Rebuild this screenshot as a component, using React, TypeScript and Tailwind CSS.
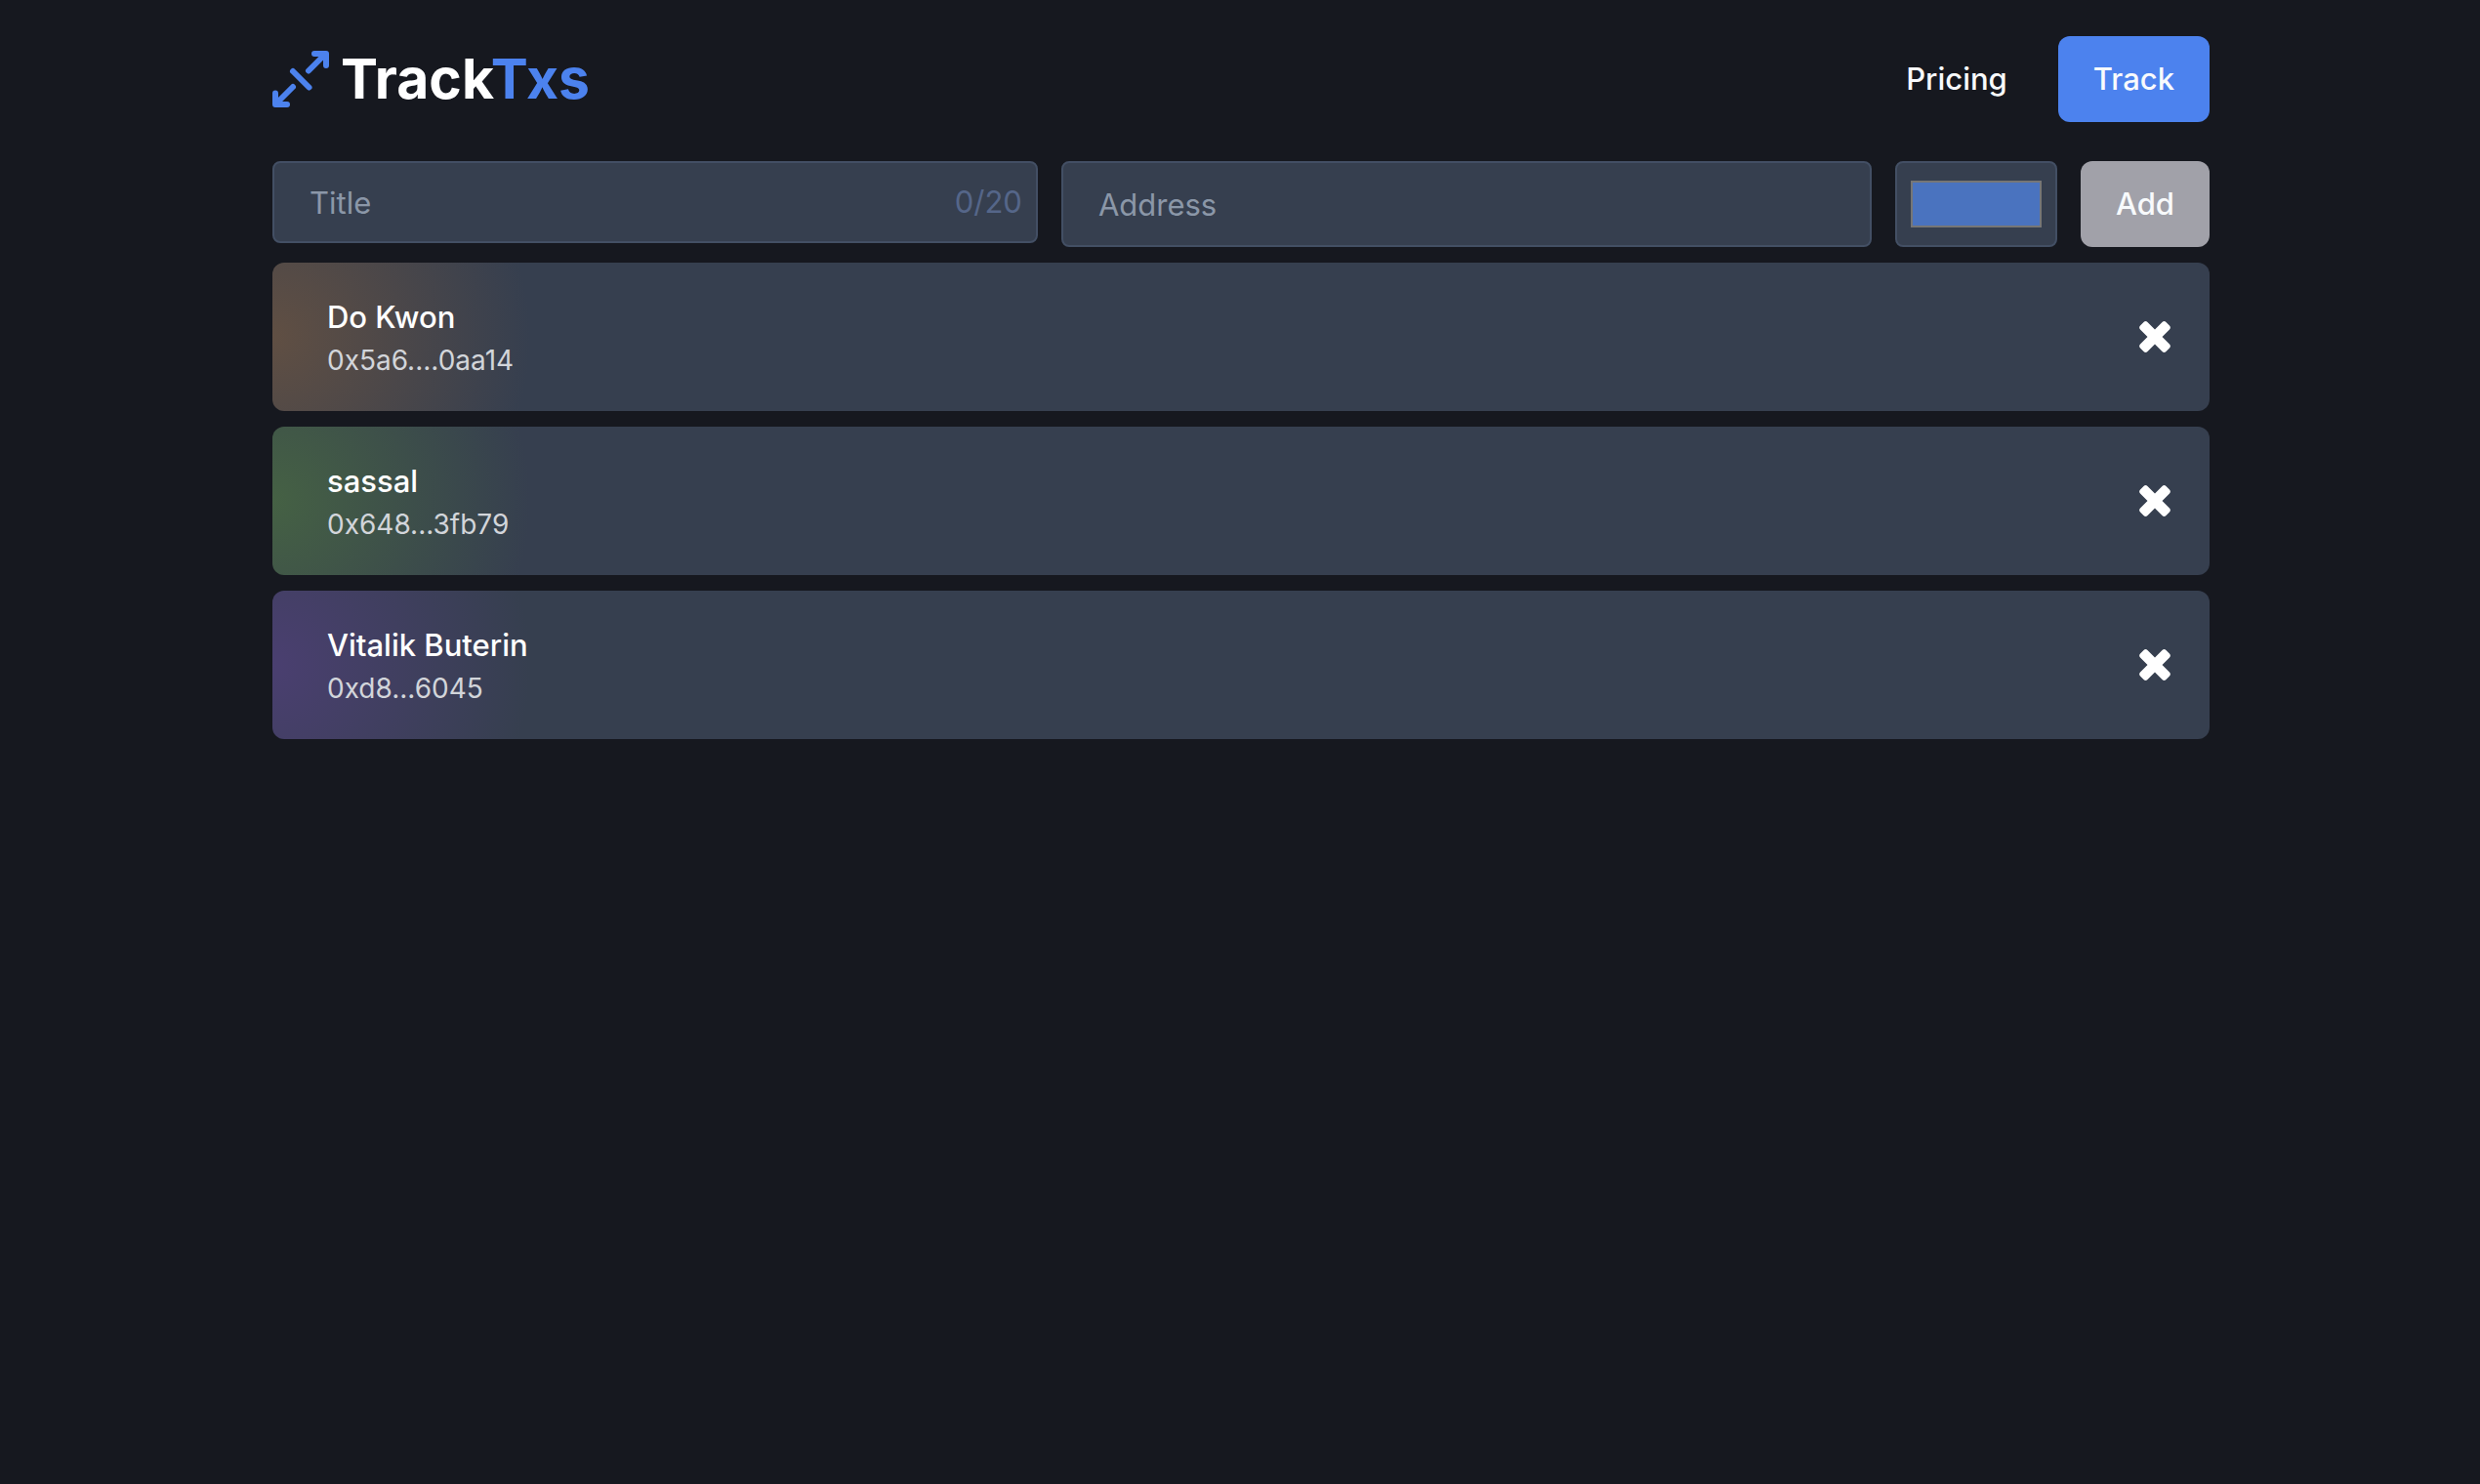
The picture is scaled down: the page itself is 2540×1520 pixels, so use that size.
import { useState } from "react";

const ACCOUNTS = [
  { name: "Do Kwon", address: "0x5a6....0aa14", color: "#604f43" },
  { name: "sassal", address: "0x648...3fb79", color: "#456144" },
  { name: "Vitalik Buterin", address: "0xd8...6045", color: "#4a3f70" },
];

const MAX_TITLE = 20;

function Logo() {
  return (
    <a href="#" className="flex items-center gap-3">
      <svg
        aria-hidden
        viewBox="0 0 58 58"
        className="size-[58px] text-[#4c82ee]"
        fill="none"
        stroke="currentColor"
        strokeWidth="6"
        strokeLinecap="round"
        strokeLinejoin="round"
      >
        <path d="M37 20.500 53.500 4M43 3h12v12" />
        <path d="M21 37 4.500 53.500M3 43.500V55h12" />
        <path d="m21 21 16.500 16.500" />
      </svg>
      <span className="text-[57px] leading-[72px] font-bold text-white">
        Track<span className="text-[#4c82ee]">Txs</span>
      </span>
    </a>
  );
}

function Header() {
  return (
    <header className="flex items-center justify-between pt-[37px] pb-10">
      <Logo />
      <nav className="flex items-center gap-4 text-[31px] leading-[48px] font-medium text-slate-50">
        <a href="#pricing" className="px-9 py-5">
          Pricing
        </a>
        <a href="#track" className="rounded-xl bg-[#4c82ee] px-9 py-5">
          Track
        </a>
      </nav>
    </header>
  );
}

function AddForm() {
  const [title, setTitle] = useState("");
  const [address, setAddress] = useState("");
  const [color, setColor] = useState("#4a73bf");

  return (
    <form
      className="flex items-start gap-6 text-[31px] leading-[48px]"
      onSubmit={(e) => e.preventDefault()}
    >
      <div className="relative min-w-0 flex-[17]">
        <input
          aria-label="Title"
          placeholder="Title"
          maxLength={MAX_TITLE}
          value={title}
          onChange={(e) => setTitle(e.target.value)}
          className="block h-[84px] w-full rounded-lg border-2 border-[#434f64] bg-[#363f4f] px-9 text-white placeholder:text-[#8b97a8]"
        />
        <span className="pointer-events-none absolute top-[18px] right-4 text-[#556689]">
          {title.length}/{MAX_TITLE}
        </span>
      </div>
      <div className="min-w-0 flex-[18]">
        <input
          aria-label="Address"
          placeholder="Address"
          value={address}
          onChange={(e) => setAddress(e.target.value)}
          className="block h-[88px] w-full rounded-lg border-2 border-[#434f64] bg-[#363f4f] px-9 text-white placeholder:text-[#8b97a8]"
        />
      </div>
      <input
        type="color"
        aria-label="Color"
        value={color}
        onChange={(e) => setColor(e.target.value)}
        className="h-[88px] w-[166px] shrink-0 rounded-lg border-2 border-[#434f64] bg-[#363f4f] px-[14px] py-[18px] [&::-webkit-color-swatch]:rounded-none [&::-webkit-color-swatch]:border-2 [&::-webkit-color-swatch]:border-[#767676] [&::-webkit-color-swatch-wrapper]:p-0"
      />
      <button
        type="submit"
        className="h-[88px] shrink-0 rounded-xl bg-[#a1a1a9] px-9 font-medium text-slate-50"
      >
        Add
      </button>
    </form>
  );
}

function AccountRow({ name, address, color }: (typeof ACCOUNTS)[number]) {
  return (
    <li
      className="flex items-center justify-between rounded-xl bg-[#363f4f] py-8 pr-10 pl-14"
      style={{
        backgroundImage: `radial-gradient(circle at 0% 50%, ${color}, #363f4f 264px)`,
      }}
    >
      <div>
        <h2 className="text-[31px] leading-[48px] font-medium text-white">{name}</h2>
        <p className="text-[28px] leading-[40px] text-[#d2d5da]">{address}</p>
      </div>
      <button type="button" aria-label={`Remove ${name}`} className="text-white">
        <svg aria-hidden viewBox="0 0 32 32" className="size-8" fill="currentColor">
          <path d="M1 8.500a3 3 0 0 1 0-4L4.500 1a3 3 0 0 1 4 0L16 8.500 23.500 1a3 3 0 0 1 4 0L31 4.500a3 3 0 0 1 0 4L23.500 16l7.500 7.500a3 3 0 0 1 0 4L27.500 31a3 3 0 0 1-4 0L16 23.500 8.500 31a3 3 0 0 1-4 0L1 27.500a3 3 0 0 1 0-4L8.500 16z" />
        </svg>
      </button>
    </li>
  );
}

export default function App() {
  return (
    <div className="min-h-screen bg-[#16181f] font-[Inter,sans-serif]">
      <div className="mx-auto max-w-[2050px] pr-8 pl-[34px]">
        <Header />
        <main>
          <AddForm />
          <ul className="mt-4 flex flex-col gap-4">
            {ACCOUNTS.map((account) => (
              <AccountRow key={account.address} {...account} />
            ))}
          </ul>
        </main>
      </div>
    </div>
  );
}
